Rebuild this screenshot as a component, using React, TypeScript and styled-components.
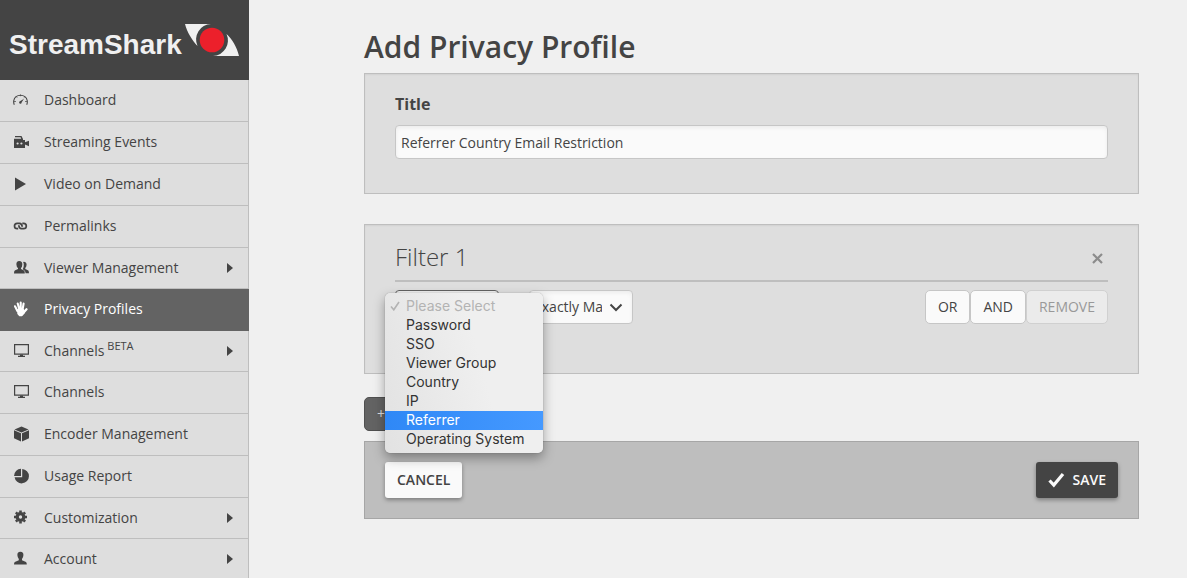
import React from 'react';
import styled, { createGlobalStyle, css } from 'styled-components';

const GlobalStyle = createGlobalStyle`
  *, *::before, *::after { box-sizing: border-box; }
  body {
    margin: 0;
    background: #f0f0f0;
    color: #444;
    font-family: "Open Sans", "Noto Sans", sans-serif;
    font-size: 14px;
    line-height: 20px;
  }
  button, input, select { font: inherit; color: inherit; }
`;

const Shell = styled.div`
  display: flex;
  height: 100vh;
  overflow: hidden;
`;

/* ---------- Sidebar ---------- */

const Sidebar = styled.aside`
  flex: 0 0 249px;
  overflow: hidden;
  background: #dedede;
`;

const Brand = styled.a`
  display: flex;
  align-items: center;
  height: 80px;
  padding: 10px 9px 0;
  background: #444;
  color: #f0f0f0;
  font-size: 28px;
  font-weight: 700;
  line-height: 40px;
  text-decoration: none;
`;

const BrandName = styled.span`
  flex: 0 0 175px;
  font-family: "Liberation Sans", sans-serif;
`;

const BrandMark = styled.svg`
  flex: none;
  width: 56px;
  height: 36px;
  margin-bottom: 10px;
`;

const NavList = styled.ul`
  display: grid;
  grid-template-rows: 42px 42px 42px 42px 41px 42px 41px 42px 42px 42px 41px 42px;
  margin: 0;
  padding: 0;
  list-style: none;
`;

const NavLink = styled.a<{ $active?: boolean }>`
  display: flex;
  align-items: center;
  height: 100%;
  padding: 0 15px 1px 13px;
  border-right: 1px solid #bebebe;
  border-bottom: 1px solid #bebebe;
  color: #444;
  text-decoration: none;
  ${(p) =>
    p.$active &&
    css`
      background: #636363;
      border-color: #636363;
      color: #fff;
    `}
`;

const NavIcon = styled.svg`
  flex: none;
  width: 16px;
  height: 16px;
  margin-right: 15px;
`;

const NavLabel = styled.span`
  flex: 1;
`;

const Beta = styled.sup`
  font-size: 11px;
  line-height: 0;
`;

const Caret = styled.svg`
  width: 6px;
  height: 10px;
`;

/* ---------- Main ---------- */

const Main = styled.main`
  flex: 1;
  min-width: 0;
  padding: 24px 48px 0 115px;
`;

const PageTitle = styled.h1`
  margin: 0 0 3px;
  font-size: 30px;
  font-weight: 600;
  line-height: 46px;
`;

const Panel = styled.section`
  margin-bottom: 30px;
  padding: 20px 30px 34px;
  background: #dedede;
  border: 1px solid #bebebe;
  box-shadow: inset 0 1px 2px rgba(0, 0, 0, 0.06);
`;

const FilterPanel = styled(Panel)`
  margin-bottom: 23px;
  padding: 10px 30px 49px;
`;

const FieldLabel = styled.label`
  display: block;
  margin-bottom: 11px;
  font-size: 16px;
  font-weight: 700;
`;

const TextInput = styled.input`
  display: block;
  width: 100%;
  height: 34px;
  padding: 0 5px;
  background: #fafafa;
  border: 1px solid #c6c6c6;
  border-radius: 4px;
  box-shadow: inset 0 2px 4px rgba(0, 0, 0, 0.06);
`;

const FilterHeader = styled.header`
  display: flex;
  align-items: center;
  justify-content: space-between;
  margin-bottom: 8px;
  border-bottom: 2px solid #bebebe;
`;

const FilterTitle = styled.h2`
  margin: 0;
  padding-bottom: 1px;
  font-size: 24px;
  font-weight: 300;
  line-height: 44px;
`;

const CloseButton = styled.button`
  display: flex;
  padding: 7px 5px 5px;
  background: none;
  border: 0;
  color: #8c8c8c;
`;

const FilterRow = styled.div`
  display: flex;
  align-items: center;
  gap: 30px;
`;

const SelectWrap = styled.div`
  position: relative;
  width: 104px;
`;

const Select = styled.select<{ $open?: boolean }>`
  appearance: none;
  display: block;
  width: 100%;
  height: 34px;
  padding: 0 30px 0 4px;
  background: #fafafa;
  border: 1px solid ${(p) => (p.$open ? '#636363' : '#c6c6c6')};
  border-radius: 4px;
  box-shadow: inset 0 2px 4px rgba(0, 0, 0, 0.06);
`;

const SelectArrow = styled.svg`
  position: absolute;
  top: 13px;
  right: 10px;
  width: 14px;
  height: 9px;
  pointer-events: none;
`;

const Menu = styled.ul`
  position: absolute;
  z-index: 2;
  top: 3px;
  left: -10px;
  width: 158px;
  margin: 0;
  padding: 4px 0;
  list-style: none;
  background: linear-gradient(75deg, #e2e2e2, #efefef 60%);
  border-radius: 5px;
  box-shadow: 0 0 1px rgba(0, 0, 0, 0.45), 0 5px 12px rgba(0, 0, 0, 0.35);
  color: #333;
  font-family: Inter, Roboto, sans-serif;
  line-height: 17px;
`;

const MenuItem = styled.li<{ $state?: 'disabled' | 'hover' }>`
  display: flex;
  align-items: center;
  height: 19px;
  padding: 0 0 2px 21px;
  white-space: nowrap;
  ${(p) =>
    p.$state === 'disabled' &&
    css`
      gap: 6px;
      padding-left: 5px;
      color: #b3b3b3;
    `}
  ${(p) =>
    p.$state === 'hover' &&
    css`
      background: linear-gradient(90deg, #2f88f6, #4599ff);
      color: #fff;
    `}
`;

const ButtonGroup = styled.div`
  display: flex;
  margin-left: auto;
`;

const Button = styled.button`
  height: 34px;
  padding: 0 12px;
  background: #fafafa;
  border: 1px solid #c6c6c6;
  border-radius: 5px;
  &:disabled {
    background: #ebebeb;
    border-color: #d0d0d0;
    color: #999;
  }
`;

const AddButton = styled(Button)`
  display: block;
  width: 140px;
  margin-bottom: 10px;
  background: #636363;
  border-color: #505050;
  color: #ddd;
  text-align: left;
`;

const ActionBar = styled.footer`
  display: flex;
  justify-content: space-between;
  padding: 20px;
  background: #bebebe;
  border: 1px solid #a6a6a6;
`;

const ActionButton = styled.button<{ $primary?: boolean }>`
  display: flex;
  align-items: center;
  gap: 8px;
  height: 36px;
  padding: 0 12px;
  background: ${(p) => (p.$primary ? '#444' : '#fafafa')};
  border: 0;
  border-radius: 3px;
  box-shadow: 0 2px 4px rgba(0, 0, 0, 0.35);
  color: ${(p) => (p.$primary ? '#fafafa' : '#444')};
  font-weight: 600;
`;

/* ---------- Icons, all on a 16px grid ---------- */

const line = { fill: 'none', stroke: 'currentColor' } as const;

const icons = {
  gauge: (
    <>
      <path d="M1.300 12.800Q.4 11 .8 8.500A6.800 6.400 0 0 1 14.200 8.500Q14.600 11 13.700 12.800" {...line} strokeWidth="1.100" />
      <path d="M1 9.500h2M12 9.500h2M3 4.500l1.200 1.200M7.500 2.500v1.700M12 4.500l-1.200 1.200" {...line} strokeWidth="0.700" />
      <path d="M11 6.700 8.700 10.300A1.300 1.300 0 1 1 7 9.200Z" fill="currentColor" />
    </>
  ),
  camera: (
    <path
      fill="currentColor"
      fillRule="evenodd"
      d="M2 2h6.500l1.500 3v1h2v2.200L16 6.800v5.500l-4-1.900V14H1V4.800h7.200L7.600 3.200H2ZM4.600 8.400a1.100 1.100 0 1 0 0 2.200a1.100 1.100 0 0 0 0-2.200M8.400 8.400a1.100 1.100 0 1 0 0 2.200a1.100 1.100 0 0 0 0-2.200"
    />
  ),
  play: <path fill="currentColor" d="M2 1.500v13L13 8Z" />,
  link: (
    <path
      d="M5.200 10.700H4.200a2.700 2.700 0 0 1 0-5.400H6.500Q9 5.500 9.200 8.800M9.300 5.300h1.300a2.700 2.700 0 0 1 0 5.400H8.500Q6 10.500 5.800 7.200"
      {...line}
      strokeWidth="1.700"
    />
  ),
  users: (
    <g fill="currentColor">
      <path d="M10 1.900a2.600 2.800 0 0 1 3.600 2.600q0 2.200-1.300 3.500v.9l3 1.600q.6.500.7 2.700h-3.400q-.2-2-1.200-2.700L9.800 9.200Q10.800 7.800 10.800 5T10 1.900Z" />
      <path d="M6.200 1C8.400 1 9.400 2.400 9.300 4.400Q9.200 6.800 8 8v1l3 1.600q.8.600.8 2.800H1q0-2.200.8-2.800L5 9V8Q3.500 6.800 3.400 4.400C3.300 2.400 4.200 1 6.200 1Z" />
    </g>
  ),
  hand: (
    <g {...line} strokeLinecap="round" strokeLinejoin="round">
      <path d="M2 5.300 4.400 10M4.700 2.500 6.200 8M7.700 1.500V8M10.600 2.600 9.600 8.500" strokeWidth="2.100" />
      <path d="M13.500 8.300 10.600 11.500" strokeWidth="2.400" />
      <path d="M5 9h5.200l.6 2.800-2 2.400H6.800L5.300 12.600Z" strokeWidth="2" fill="currentColor" />
    </g>
  ),
  monitor: (
    <>
      <path d="M1.600 1.600h13.800v9.600H1.600Z" {...line} strokeWidth="1.200" />
      <path d="M7 11.500h3v1.300h2V14H5v-1.200h2Z" fill="currentColor" />
    </>
  ),
  cube: (
    <g fill="currentColor">
      <path d="M8.500.5 15.500 3.400 8.500 6.500 1.500 3.400Z" />
      <path d="M1 4.200 8 7.300V15.500L1 12.200Z" />
      <path d="M16 4.200 9 7.300V15.500L16 12.200Z" />
    </g>
  ),
  pie: (
    <g fill="currentColor">
      <path d="M9.200 1A7.200 7.200 0 1 1 1.600 9.200H9.200Z" />
      <path d="M8 .8V8H1A7.200 7.200 0 0 1 8 .8Z" />
    </g>
  ),
  cog: (
    <g stroke="currentColor" fill="none">
      <circle cx="7.500" cy="7" r="3.300" strokeWidth="3.200" />
      <path
        d="M7.500.5v2M7.500 11.500v2M1 7h2M12 7h2M2.900 2.400l1.400 1.400M10.700 10.200l1.400 1.400M12.100 2.400l-1.400 1.400M4.300 10.200l-1.400 1.400"
        strokeWidth="2.600"
      />
    </g>
  ),
  user: (
    <path
      fill="currentColor"
      d="M7.400.8c2.200 0 3.200 1.400 3 3.400Q10.200 6.700 9 8v1.300l4 1.700q.8.500.8 2.500H1q0-2 .8-2.500l4-1.700V8Q4.600 6.700 4.400 4.200C4.200 2.200 5.200.8 7.400.8Z"
    />
  ),
};

type NavItem = {
  icon: keyof typeof icons;
  label: string;
  beta?: boolean;
  expandable?: boolean;
  active?: boolean;
};

const navItems: NavItem[] = [
  { icon: 'gauge', label: 'Dashboard' },
  { icon: 'camera', label: 'Streaming Events' },
  { icon: 'play', label: 'Video on Demand' },
  { icon: 'link', label: 'Permalinks' },
  { icon: 'users', label: 'Viewer Management', expandable: true },
  { icon: 'hand', label: 'Privacy Profiles', active: true },
  { icon: 'monitor', label: 'Channels', beta: true, expandable: true },
  { icon: 'monitor', label: 'Channels' },
  { icon: 'cube', label: 'Encoder Management' },
  { icon: 'pie', label: 'Usage Report' },
  { icon: 'cog', label: 'Customization', expandable: true },
  { icon: 'user', label: 'Account', expandable: true },
];

const filterTypes = ['Password', 'SSO', 'Viewer Group', 'Country', 'IP', 'Referrer', 'Operating System'];

export default function App() {
  return (
    <Shell>
      <GlobalStyle />
      <Sidebar>
        <Brand href="#">
          <BrandName>StreamShark</BrandName>
          <BrandMark viewBox="0 0 56 36" aria-hidden="true">
            <path fill="#f0f0f0" d="M1 2H27A15.500 15.500 0 0 0 13.500 24C8 18 3 10 1 2Z" />
            <path fill="#f0f0f0" d="M42.500 12C48 17 53 25 55 34H29A15.500 15.500 0 0 0 42.500 12Z" />
            <circle cx="28" cy="18" r="12.300" fill="#ec202b" />
          </BrandMark>
        </Brand>
        <nav>
          <NavList>
            {navItems.map((item) => (
              <li key={item.label + item.icon + (item.beta ? '-beta' : '')}>
                <NavLink href="#" $active={item.active}>
                  <NavIcon viewBox="0 0 16 16" aria-hidden="true">
                    {icons[item.icon]}
                  </NavIcon>
                  <NavLabel>
                    {item.label}
                    {item.beta && <Beta> BETA</Beta>}
                  </NavLabel>
                  {item.expandable && (
                    <Caret viewBox="0 0 6 10" aria-hidden="true">
                      <path d="M0 0 6 5 0 10Z" fill="currentColor" />
                    </Caret>
                  )}
                </NavLink>
              </li>
            ))}
          </NavList>
        </nav>
      </Sidebar>

      <Main>
        <PageTitle>Add Privacy Profile</PageTitle>
        <Panel>
          <FieldLabel htmlFor="title">Title</FieldLabel>
          <TextInput id="title" type="text" defaultValue="Referrer Country Email Restriction" />
        </Panel>

        <FilterPanel>
          <FilterHeader>
            <FilterTitle>Filter 1</FilterTitle>
            <CloseButton type="button" aria-label="Remove filter 1">
              <svg width="11" height="11" viewBox="0 0 11 11" aria-hidden="true">
                <path d="M1 1l9 9M10 1l-9 9" stroke="currentColor" strokeWidth="2.200" />
              </svg>
            </CloseButton>
          </FilterHeader>
          <FilterRow>
            <SelectWrap>
              <Select $open aria-label="Filter type" defaultValue="">
                <option value="" />
                {filterTypes.map((type) => (
                  <option key={type}>{type}</option>
                ))}
              </Select>
              <Menu role="listbox" aria-label="Filter type">
                <MenuItem role="option" aria-selected="true" $state="disabled">
                  <svg width="10" height="10" viewBox="0 0 10 10" aria-hidden="true">
                    <path d="M1 5.500 3.800 8.800 9 1" fill="none" stroke="currentColor" strokeWidth="1.600" />
                  </svg>
                  Please Select
                </MenuItem>
                {filterTypes.map((type) => (
                  <MenuItem
                    key={type}
                    role="option"
                    aria-selected="false"
                    $state={type === 'Referrer' ? 'hover' : undefined}
                  >
                    {type}
                  </MenuItem>
                ))}
              </Menu>
            </SelectWrap>
            <SelectWrap>
              <Select aria-label="Match rule">
                <option>Exactly Matches</option>
              </Select>
              <SelectArrow viewBox="0 0 14 9" aria-hidden="true">
                <path d="M1.500 1.500 7 7l5.500-5.500" fill="none" stroke="currentColor" strokeWidth="2" />
              </SelectArrow>
            </SelectWrap>
            <ButtonGroup>
              <Button type="button">OR</Button>
              <Button type="button">AND</Button>
              <Button type="button" disabled>
                REMOVE
              </Button>
            </ButtonGroup>
          </FilterRow>
        </FilterPanel>

        <AddButton type="button" aria-label="Add filter">
          +
        </AddButton>

        <ActionBar>
          <ActionButton type="button">CANCEL</ActionButton>
          <ActionButton type="submit" $primary>
            <svg width="17" height="16" viewBox="0 0 17 16" aria-hidden="true">
              <path d="M1.500 8.500 5.800 13 15 2" fill="none" stroke="currentColor" strokeWidth="3.200" />
            </svg>
            SAVE
          </ActionButton>
        </ActionBar>
      </Main>
    </Shell>
  );
}
